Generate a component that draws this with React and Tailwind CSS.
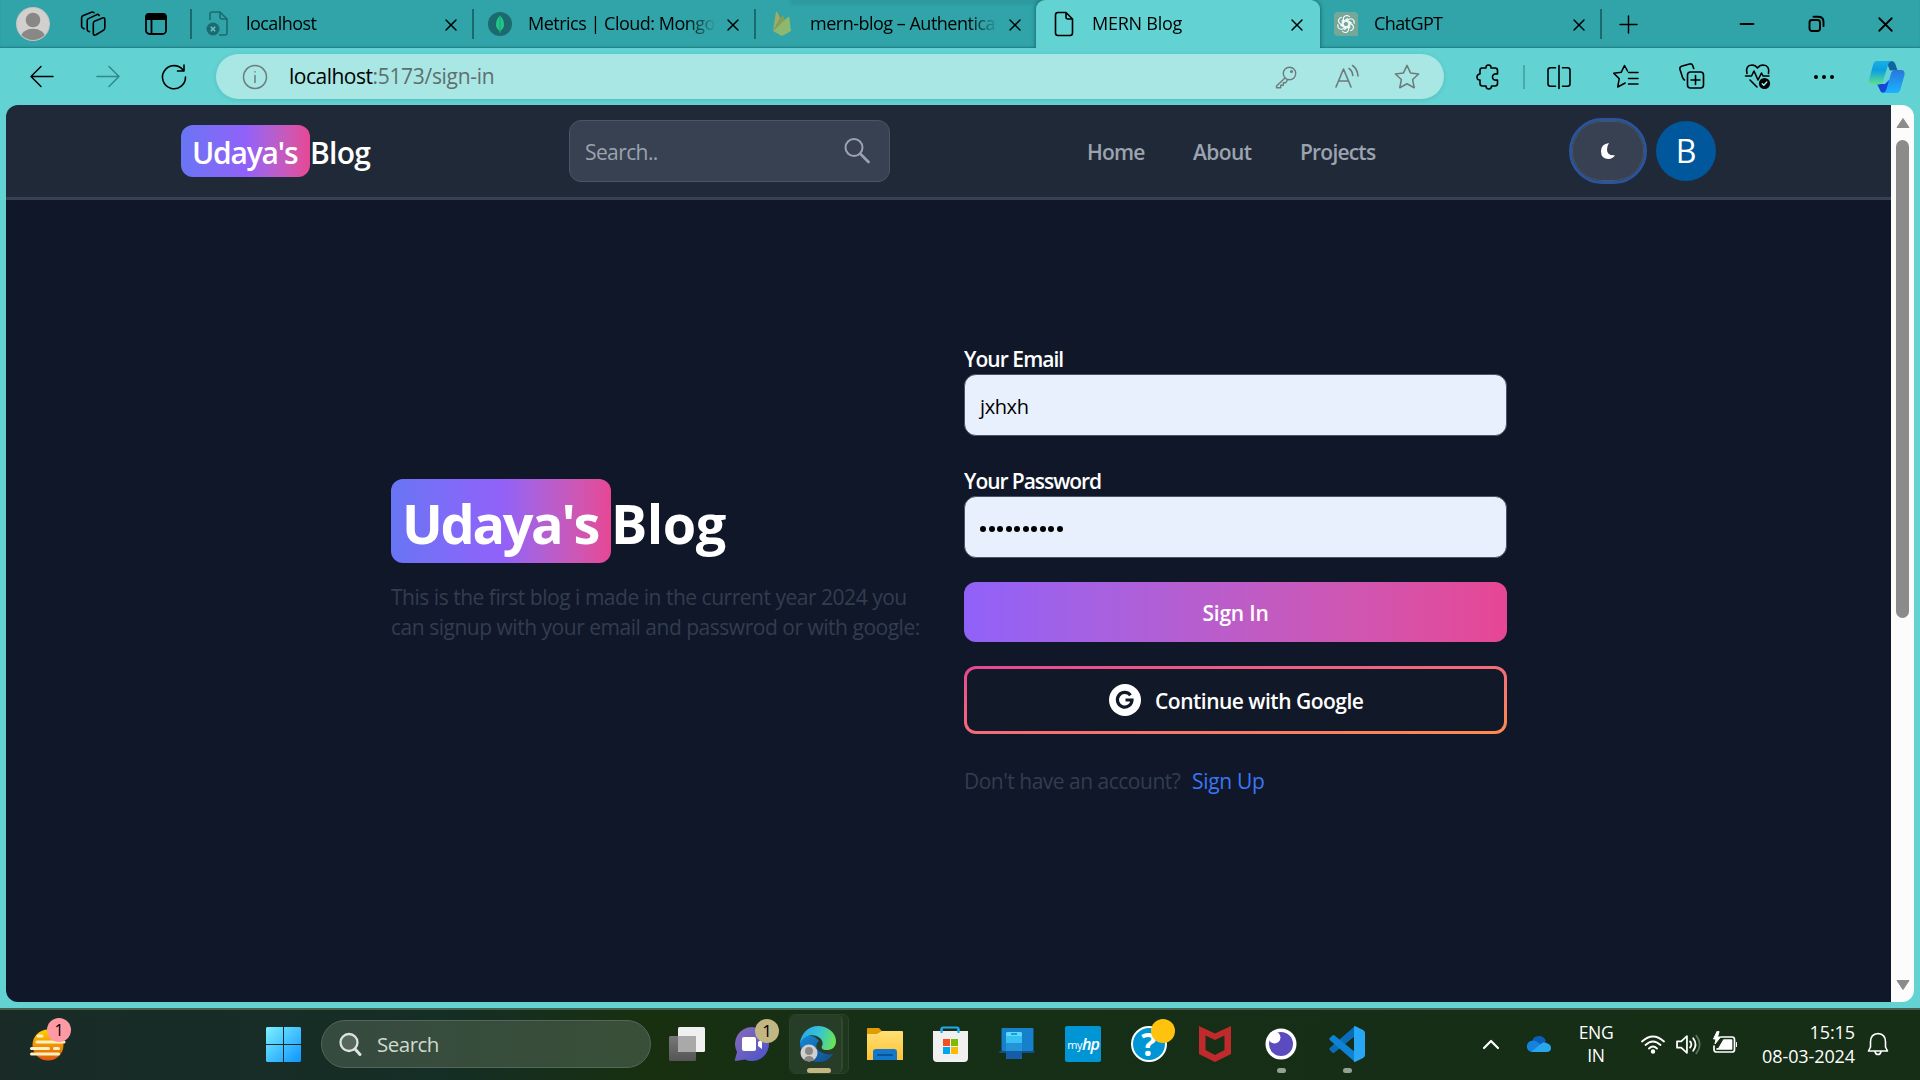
import React from 'react';
import { X, Plus, Minus } from 'lucide-react';

const Svg = ({ className, box = '0 0 24 24', children, sw = 1.5 }) => (
  <svg className={`shrink-0 ${className}`} viewBox={box} fill="none" stroke="currentColor" strokeWidth={sw} strokeLinecap="round" strokeLinejoin="round">
    {children}
  </svg>
);

function Tab({ icon, title, active, textClass }) {
  return (
    <div className={`relative flex h-[48px] shrink-0 items-center ${active ? '-mr-[2px] w-[284px] rounded-t-[9px] bg-[#62d2d2] pb-px shadow-[0_0_4px_rgba(0,50,60,0.7)]' : 'w-[282px] pb-px'}`}>
      <div className="flex w-[56px] shrink-0 items-center pl-[16px]">{icon}</div>
      <div className="mt-[-2px] w-[188px] shrink-0 overflow-hidden whitespace-nowrap text-[18px] leading-[28px] text-black [mask-image:linear-gradient(to_right,black_84%,transparent)]">
        <span className={textClass}>{title}</span>
      </div>
      <X className="ml-[7px] mt-[2px] h-[20px] w-[20px] shrink-0 text-black" strokeWidth={1.7} />
    </div>
  );
}

const Divider = () => <div className="-mr-[2px] h-[30px] w-[2px] shrink-0 bg-[#1b696d]" />;

function TabStrip() {
  return (
    <div className="relative flex h-[48px] items-center overflow-hidden bg-[#30a4a8] shadow-[inset_0_-2px_2px_-1px_#1f7c82]">
      <div className="absolute left-[790px] top-0 h-[3px] w-[340px] rounded-full bg-[#277f85] opacity-60 blur-[2px]" />
      <svg className="ml-[16px] h-[34px] w-[34px] shrink-0" viewBox="0 0 34 34">
        <clipPath id="av"><circle cx="17" cy="17" r="16" /></clipPath>
        <circle cx="17" cy="17" r="17" fill="#c4c3c1" />
        <circle cx="17" cy="17" r="16" fill="#d2d0ce" />
        <g clipPath="url(#av)" fill="#8a8886"><circle cx="17" cy="13" r="7.3" /><ellipse cx="17" cy="30" rx="12" ry="8.3" /></g>
      </svg>
      <Svg className="ml-[30px] h-[26px] w-[26px] text-black" box="0 0 26 26" sw={1.6}>
        <path d="M14.500 10.300l8-3.400q2.300-.7 2.300 1.500v8.700q0 1.600-1.500 2.300l-7.300 4.300q-2.700 1.300-2.700-1.500v-9.700q0-1.600 1.200-2.200z" />
        <path d="M9.500 20.700L8 20q-.8-.5-.8-1.700V9.700q0-1.500 1.200-2.100l8.500-4q1.800-.6 2.300.8" />
        <path d="M4 17.800l-1.500-.9q-.9-.5-.9-1.700V6.900q0-1.500 1.200-2.100l8.700-3.600q1.500-.5 2.500.5" />
      </Svg>
      <Svg className="ml-[38px] h-[24px] w-[24px] text-black" sw={1.8}>
        <rect x="2" y="2" width="20" height="20" rx="3.500" /><path d="M2 7V5q0-3 3-3h14q3 0 3 3v2z" fill="currentColor" /><path d="M7.500 7v15" />
      </Svg>
      <div className="ml-[22px] flex shrink-0 items-center">
        <Divider />
        <Tab title="localhost" textClass="tracking-[-0.55px]" icon={
          <svg className="h-[25px] w-[23px]" viewBox="0 0 23 25" fill="none" stroke="#1c6b6e" strokeWidth="1.600">
            <path d="M4 9V3q0-2 2-2h8l7 7v14q0 2-2 2h-6M14 1v5q0 2 2 2h5" /><circle cx="7" cy="18" r="6.500" fill="#1c6b6e" stroke="none" /><path d="M4.800 15.800l4.400 4.400m0-4.400l-4.400 4.400" stroke="#5fc9ca" strokeWidth="1.500" />
          </svg>} />
        <Divider />
        <Tab title="Metrics | Cloud: Mongo" textClass="tracking-[-0.5px]" icon={
          <svg className="h-[24px] w-[24px]" viewBox="0 0 24 24"><circle cx="12" cy="12" r="12" fill="#1b6a6e" /><path d="M12 3.500q4 4 4 9 0 4-3.500 6.200l-.2 2h-.6l-.2-2Q8 16.500 8 12.500q0-5 4-9z" fill="#22c587" /><path d="M12 3.500v17" stroke="#1b9b70" strokeWidth=".8" /></svg>} />
        <Divider />
        <Tab title="mern-blog – Authentica" textClass="tracking-[-0.5px]" icon={
          <svg className="ml-[2px] h-[25px] w-[20px]" viewBox="0 0 20 25"><path d="M1 20L4 1q.5-1 1.200 0l3 6z" fill="#a3ab60" /><path d="M1 20L10 5q.6-.8 1.200 0l2 4z" fill="#8e9b52" /><path d="M1 20L16 6q1-.6 1.300.5L19 20l-8 4.500q-1 .5-2 0z" fill="#8db870" /></svg>} />
        <Tab active title="MERN Blog" textClass="tracking-[-0.25px]" icon={
          <Svg className="ml-[2px] h-[26px] w-[20px] text-black" box="0 0 20 26" sw={1.600}><path d="M12 1.500H4q-2.500 0-2.500 2.500v18q0 2.500 2.500 2.500h12q2.500 0 2.500-2.500V8zM12 1.500V6q0 2 2 2h4.500" /></Svg>} />
        <Tab title="ChatGPT" textClass="tracking-[-0.6px]" icon={
          <svg className="h-[24px] w-[24px]" viewBox="0 0 24 24"><path d="M4 0h16q4 0 4 4v20H4q-4 0-4-4V4q0-4 4-4z" fill="#76a899" /><g fill="none" stroke="#fff" strokeWidth="1.100">
            {[0, 60, 120, 180, 240, 300].map((a) => <path key={a} transform={`rotate(${a} 12 12)`} d="M9.300 13.500V7.300q.2-3.500 3.300-3.800 2 0 3.200 1.500M9.300 9.200l4.600-2.600" />)}
          </g></svg>} />
        <Divider />
      </div>
      <Plus className="ml-[14px] h-[29px] w-[29px] shrink-0 text-black" strokeWidth={1.200} />
      <Minus className="ml-[93px] h-[22px] w-[22px] shrink-0 text-black" strokeWidth={2} />
      <Svg className="ml-[50px] h-[18px] w-[18px] text-black" box="0 0 18 18" sw={1.900}><rect x="1.500" y="5" width="10.500" height="11" rx="2.500" /><path d="M5.500 1.800h4.500q5.500 0 5.500 5v4.200" /></Svg>
      <X className="ml-[47px] h-[25px] w-[25px] shrink-0 text-black" strokeWidth={1.700} />
    </div>
  );
}

function Toolbar() {
  return (
    <div className="flex h-[57px] items-center bg-[#62d2d2] text-black">
      <Svg className="ml-[28px] h-[28px] w-[28px]" box="0 0 28 28" sw={1.500}><path d="M25 13.500H3M13 3.500l-10 10 10 10" /></Svg>
      <Svg className="ml-[39px] h-[28px] w-[28px] text-[#33888a]" box="0 0 28 28" sw={1.500}><path d="M2 13.500h22M14 3.500l10 10-10 10" /></Svg>
      <Svg className="ml-[37px] h-[28px] w-[28px]" box="0 0 28 28" sw={1.600}><path d="M25.500 14A11.500 11.500 0 1 1 23 7M24 2v6h-6.500" /></Svg>
      <div className="ml-[28px] flex h-[45px] w-[1228px] items-center rounded-full bg-[#a8e7e4] text-[#6d7b7b] shadow-[0_1px_4px_rgba(20,90,90,0.15)]">
        <Svg className="ml-[26px] h-[26px] w-[26px]" box="0 0 26 26" sw={1.500}><circle cx="13" cy="13" r="11.500" /><path d="M13 11.500V18.500M13 7.800v.2" /></Svg>
        <div className="ml-[21px] flex-1 whitespace-nowrap pt-px text-[21px] tracking-[-0.5px] text-[#5f6e6e]"><span className="text-black">localhost</span><span className="tracking-[-0.3px]">:5173/sign-in</span></div>
        <Svg className="h-[24px] w-[24px]" sw={1.400}><circle cx="15.500" cy="8.500" r="6.200" /><path d="M11 13l-8.500 8v1.800h4.200v-2.500h2.600v-2.600h2.500L13.500 15" /><circle cx="17.500" cy="6.500" r=".8" fill="currentColor" /></Svg>
        <Svg className="ml-[36px] h-[26px] w-[26px]" box="0 0 26 26" sw={1.600}><path d="M2 23L9.500 5 17 23M4.800 17h9.500M15 4.500q3.500 2.500 3.800 7M18.500 1.500q5 3.500 5.500 10.500" /></Svg>
        <Svg className="ml-[33px] mr-[23px] h-[28px] w-[28px]" sw={1.300}><path d="M12 2l3 6.500 7 .9-5.200 4.800 1.400 7L12 17.800l-6.200 3.400 1.400-7L2 9.400l7-.9z" /></Svg>
      </div>
      <Svg className="ml-[30px] h-[28px] w-[28px]" box="0 0 28 28" sw={1.600}><path d="M8 5h4q-.3-3 2.500-3T17 5h4q2.500 0 2.500 2.500V11q-5-.7-5 3t5 3v3.500Q23.500 23 21 23h-3.500q0 3-2.700 3t-2.800-3H8.500Q6 23 6 20.500V17q-3 .2-3-2.800T6 11V7.500Q6 5 8 5z" /></Svg>
      <div className="ml-[21px] h-[24px] w-[2px] shrink-0 bg-[#4aa9aa]" />
      <Svg className="ml-[21px] h-[26px] w-[26px]" box="0 0 26 26" sw={1.600}><path d="M9.500 3.800H4.500q-2.500 0-2.500 2.500v13.500q0 2.500 2.500 2.500h5M16.500 3.800h5q2.500 0 2.500 2.500v13.500q0 2.500-2.500 2.500h-5M13 1.500v23" /></Svg>
      <Svg className="ml-[40px] h-[27px] w-[27px]" box="0 0 27 27" sw={1.500}><path d="M15.500 8L12.500 2.500 9.200 9.300l-7.500 1 5.500 5.300-1.500 8.400 7.500-4M16.500 9.500h9.500M16.500 15.500h9.500M16.500 21h9.500" /></Svg>
      <Svg className="ml-[39px] h-[29px] w-[29px]" box="0 0 29 29" sw={1.600}><rect x="9.500" y="10" width="16" height="16" rx="3" /><path d="M17.500 13.500v9M13 18h9M6.500 18q-1.500-1-2-2.700L2 7.500q-.6-2.400 1.500-3.200l8-2.300q2.300-.6 3.200 1.500l1 3" /></Svg>
      <Svg className="ml-[37px] h-[29px] w-[29px]" box="0 0 29 29" sw={1.600}><path d="M3 11.500Q1 3.500 8 3q3.500 0 5.500 3 2-3 5.500-3 7 .5 5.500 8.500M1.500 14h6l2.500-5 4 9 3.500-7 1.500 3h6M6 18l7 7" /><circle cx="20.500" cy="21.500" r="5.600" fill="currentColor" stroke="none" /><path d="M18.200 21.700l1.600 1.600 3-3.300" stroke="#9ff" strokeWidth="1.300" /></Svg>
      <Svg className="ml-[39px] h-[24px] w-[24px]" sw={0}><g fill="currentColor"><circle cx="4" cy="12" r="2" /><circle cx="12" cy="12" r="2" /><circle cx="20" cy="12" r="2" /></g></Svg>
      <svg className="ml-[32px] h-[34px] w-[37px] shrink-0" viewBox="0 0 37 34">
        <defs>
          <linearGradient id="c1" x1="0" y1="0" x2="0" y2="1"><stop stopColor="#18aee6" /><stop offset=".4" stopColor="#0aa0de" /><stop offset="1" stopColor="#5fe08c" /></linearGradient>
          <linearGradient id="c2" x1="0" y1="0" x2="0" y2="1"><stop stopColor="#2a76dc" /><stop offset="1" stopColor="#18b4ff" /></linearGradient>
        </defs>
        <path d="M18 1h5q3.500 0 4.500 3.500l2 6h-7.500z" fill="#10669c" />
        <path d="M9 24h8l4-4v9q-1 4-4 4h-1q-3.500 0-4.500-4z" fill="#1745d8" />
        <path d="M9 1h15q-3 .5-4 4l-5 16q-1 3.500-4.500 3.500H5Q0 24.500 1.300 19L5 5q1-4 4-4z" fill="url(#c1)" />
        <path d="M28 33H14q3.500-.5 4.500-4l4.500-15.500q1-3.500 4.500-3.500H33q4.500 0 3.300 5.500L32.500 29q-1 4-4.500 4z" fill="url(#c2)" />
      </svg>
    </div>
  );
}

function SiteHeader() {
  return (
    <header className="flex h-[95px] shrink-0 items-center border-b-[3px] border-[#374151] bg-[#1f2937]">
      <div className="ml-[175px] flex h-[52px] items-center whitespace-nowrap text-[30px] font-semibold text-white">
        <span className="flex h-[52px] w-[129px] items-center rounded-[12px] bg-gradient-to-r from-[#6875f5] via-[#9061f9] to-[#e74694] pl-[11px] pt-[2px] tracking-[-1.200px]">Udaya's</span>
        <span className="w-[70px] pt-[2px] tracking-[-0.7px]">Blog</span>
      </div>
      <div className="ml-[189px] flex h-[62px] w-[321px] items-center rounded-[12px] border-[1.500px] border-[#4b5563] bg-[#374151] text-[21px] text-[#9ca3af]">
        <span className="ml-[15px] w-[100px] pt-[3px] tracking-[-0.6px]">Search..</span>
        <Svg className="ml-[159px] h-[26px] w-[26px]" box="0 0 26 26" sw={2}><circle cx="10" cy="9.500" r="8.500" /><path d="M16.500 16l8 8" strokeWidth="2.600" /></Svg>
      </div>
      <nav className="ml-[197px] flex whitespace-nowrap pt-[3px] text-[21px] font-semibold tracking-[-0.8px] text-[#9ca3af]">
        <span className="w-[106px]">Home</span><span className="w-[107px] tracking-[-0.6px]">About</span><span className="w-[80px]">Projects</span>
      </nav>
      <div className="ml-[192px] flex h-[60px] w-[72px] items-center justify-center rounded-full border-[1.500px] border-[#4b5563] bg-[#374151] outline-[3px] outline-[#2c549a]">
        <svg className="h-[18px] w-[18px]" viewBox="0 0 18 18"><path d="M10 1Q2 2 2 9.300 2 17 9.500 17q4 0 6.500-3.800Q8 14 8 7.500 8 4 10 1z" fill="#fff" /></svg>
      </div>
      <div className="ml-[12px] flex h-[60px] w-[60px] items-center justify-center rounded-full bg-[#00579b] text-[32px] text-white">B</div>
    </header>
  );
}

const field = 'flex h-[62px] items-center rounded-[12px] border-[1.500px] border-[#4b5563] bg-[#e8f0fe] text-[20px] text-black';

function SignIn() {
  return (
    <main className="flex flex-1 items-start bg-[#101729] text-[21px]">
      <section className="ml-[385px] mt-[279px] w-[573px]">
        <h1 className="flex items-center whitespace-nowrap text-[54px] font-bold leading-none text-white">
          <span className="flex h-[84px] w-[220px] items-center rounded-[12px] bg-gradient-to-r from-[#6875f5] via-[#9061f9] to-[#e74694] pl-[11px] pt-[4px] tracking-[-2.300px]">Udaya's</span>
          <span className="pt-[4px] tracking-[-0.500px]">Blog</span>
        </h1>
        <p className="mt-[20px] whitespace-nowrap leading-[29px] text-[#323d4e]">
          <span className="block h-[30px] tracking-[-0.48px]">This is the first blog i made in the current year 2024 you</span>
          <span className="block h-[30px] tracking-[-0.48px]">can signup with your email and passwrod or with google:</span>
        </p>
      </section>
      <section className="mt-[144px] flex w-[543px] flex-col whitespace-nowrap font-semibold text-white">
        <div className="h-[30px] leading-[30px] tracking-[-0.95px]">Your Email</div>
        <div className={`${field} pl-[15px] pt-[3px] font-normal tracking-[-0.4px]`}>jxhxh</div>
        <div className="mt-[30px] h-[30px] leading-[30px] tracking-[-1.05px]">Your Password</div>
        <div className={`${field} gap-[2.500px] pl-[15px] pt-[3px]`}>
          {Array.from({ length: 10 }, (_, i) => <i key={i} className="h-[6px] w-[6px] rounded-full bg-black" />)}
        </div>
        <button className="mt-[24px] h-[60px] rounded-[12px] bg-gradient-to-r from-[#9061f9] to-[#e74694] pt-[4px] tracking-[-0.2px]">Sign In</button>
        <div className="mt-[24px] h-[68px] rounded-[12px] bg-gradient-to-br from-[#e74694] to-[#ff8a4c] p-[3px]">
          <button className="flex h-full w-full items-center rounded-[9px] bg-[#111827]">
            <svg className="ml-[142px] h-[32px] w-[32px]" viewBox="0 0 32 32"><circle cx="16" cy="16" r="16" fill="#fff" /><path d="M21.500 11.300A7.300 7.300 0 1 0 23 16h-6.500" fill="none" stroke="#111827" strokeWidth="3.200" /></svg>
            <span className="ml-[14px] pt-[4px] tracking-[-0.5px]">Continue with Google</span>
          </button>
        </div>
        <div className="mt-[32px] flex font-normal leading-[30px]">
          <span className="w-[228px] tracking-[-0.5px] text-[#323d4e]">Don't have an account?</span>
          <span className="tracking-[-0.3px] text-[#3b76f6]">Sign Up</span>
        </div>
      </section>
    </main>
  );
}

function ScrollBar() {
  return (
    <div className="flex w-[23px] flex-col items-center bg-[#fcfcfc]">
      <svg className="mt-[12px] h-[12px] w-[14px]" viewBox="0 0 14 12"><path d="M7 1.500L13 10.500H1z" fill="#8b8b8b" stroke="#8b8b8b" strokeLinejoin="round" /></svg>
      <div className="mt-[11px] h-[478px] w-[13px] rounded-full bg-[#8b8b8b]" />
      <svg className="mb-[11px] mt-auto h-[12px] w-[14px]" viewBox="0 0 14 12"><path d="M7 10.500L13 1.500H1z" fill="#8b8b8b" stroke="#8b8b8b" strokeLinejoin="round" /></svg>
    </div>
  );
}

const Cell = ({ children, dot }) => (
  <div className="relative flex h-[60px] w-[60px] items-center justify-center">
    {children}
    {dot && <div className="absolute bottom-[1px] h-[5px] w-[9px] rounded-full bg-[#95a193]" />}
  </div>
);

const I = ({ children }) => <svg className="h-[36px] w-[36px] overflow-visible" viewBox="0 0 36 36">{children}</svg>;

function Taskbar() {
  return (
    <footer className="flex h-[72px] items-center border-t-2 border-[#46604f] bg-[linear-gradient(90deg,#1a2b27_0%,#152e26_23%,#18300f_34%,#162f17_45%,#162d16_100%)] pb-[2px]">
      <div className="relative ml-[29px] h-[40px] w-[42px]">
        <svg className="h-[40px] w-[40px]" viewBox="0 0 40 40">
          <defs><linearGradient id="sun" x1="0" y1="0" x2="0" y2="1"><stop stopColor="#ffd000" /><stop offset="1" stopColor="#e2570c" /></linearGradient></defs>
          <circle cx="19" cy="21" r="15.500" fill="url(#sun)" />
          <g stroke="#fff0c0" strokeWidth="3" strokeLinecap="round"><path d="M9 12h4M8 18h27M2.500 24.500h17M25.500 24.500h4M2.500 30h27" /></g>
        </svg>
        <span className="absolute left-[18px] top-[-6px] flex h-[24px] w-[24px] items-center justify-center rounded-full bg-[#ff99a4] text-[16px] text-black">1</span>
      </div>
      <svg className="ml-[195px] h-[35px] w-[35px] shrink-0" viewBox="0 0 35 35">
        <defs><linearGradient id="win" gradientUnits="userSpaceOnUse" x1="0" y1="0" x2="35" y2="35"><stop stopColor="#7df0ff" /><stop offset="1" stopColor="#0c95ff" /></linearGradient></defs>
        <path d="M1 0h16v17H0V1zM18 0h16l1 1v16H18zM0 18h17v17H1l-1-1zM18 18h17v16l-1 1H18z" fill="url(#win)" />
      </svg>
      <div className="ml-[20px] flex h-[48px] w-[330px] items-center rounded-full border-[1.500px] border-[#52665a] bg-gradient-to-r from-[#364b40] to-[#394f37] text-[20.500px] text-[#d0d8d0]">
        <Svg className="ml-[16px] h-[24px] w-[24px] text-[#dfe3e1]" sw={2.300}><circle cx="11" cy="10.500" r="8.500" fill="#56675c" /><path d="M17 17l5 5.500" strokeWidth="3" /></Svg>
        <span className="ml-[15px] tracking-[-0.5px]">Search</span>
      </div>
      <div className="ml-[6px] flex">
        <div className="flex h-[60px] w-[60px] items-center justify-center"><I>
          <defs><linearGradient id="tv" x1="0" y1="0" x2="0" y2="1"><stop stopColor="#777" /><stop offset="1" stopColor="#555" /></linearGradient></defs>
          <rect x="0" y="10" width="27" height="25" rx="1.500" fill="url(#tv)" /><rect x="9" y="1" width="27" height="25" rx="1.500" fill="#f0f0f0" /><path d="M9 10h18v16H10.500L9 24.500z" fill="#a9a9a9" />
        </I></div>
        <div className="relative ml-[5px] flex h-[60px] w-[60px] items-center justify-center">
          <I>
            <defs><linearGradient id="ch" x1="0" y1="0" x2="1" y2="1"><stop stopColor="#8a6cb5" /><stop offset="1" stopColor="#4a52cc" /></linearGradient></defs>
            <path d="M18 1a17 17 0 1 1-7 32.500L1.500 35q-1 0-.5-1.500L3 26A17 17 0 0 1 18 1z" fill="url(#ch)" /><rect x="8" y="11" width="14" height="14" rx="2" fill="#fff" /><path d="M24 16l4-3v10l-4-3z" fill="#fff" />
          </I>
          <span className="absolute left-[33px] top-[5px] flex h-[24px] w-[24px] items-center justify-center rounded-full bg-[#c2b683] text-[17px] text-black">1</span>
        </div>
        <div className="ml-[7px] flex h-[60px] w-[60px] rounded-[6px] border border-[#2b4429] bg-[#1f371e]">
          <div className="relative flex h-full w-[53px] items-center rounded-[6px] border-r-2 border-[#304a2e] bg-[#273d27] pl-[10px]">
            <I>
              <defs>
                <linearGradient id="e1" x1="0" y1=".3" x2="1" y2=".5"><stop stopColor="#2ba6e8" /><stop offset=".5" stopColor="#35c3d8" /><stop offset="1" stopColor="#6be552" /></linearGradient>
                <linearGradient id="e2" x1="0" y1="0" x2="1" y2="1"><stop stopColor="#158ad8" /><stop offset="1" stopColor="#114a8b" /></linearGradient>
              </defs>
              <path d="M0 16C0 26 6 36 19 36c6 0 11-3 14-8-4 1-10 0-14-3-4-3-3-8 0-10C14 8 3 8 0 16z" fill="url(#e2)" />
              <path d="M0 17C1 7 9 0 18 0c10 0 18 7 18 15 0 7-5 9-9 9-5 0-6-2-5-4 1-2 1-4-1-7C16 7 4 8 0 17z" fill="url(#e1)" />
              <circle cx="9" cy="27" r="8.500" fill="#d2d0ce" /><circle cx="9" cy="25" r="4" fill="#8a8886" /><path d="M4 34q1-4 5-4t5 4q-5 2.800-10 0z" fill="#8a8886" />
            </I>
            <div className="absolute bottom-0 left-[17px] h-[5px] w-[24px] rounded-full bg-[#c2b683]" />
          </div>
        </div>
      </div>
      <div className="ml-[6px] flex gap-[6px]">
        <Cell><I>
          <defs><linearGradient id="fo" x1="0" y1="0" x2="0" y2="1"><stop stopColor="#ffdf75" /><stop offset="1" stopColor="#ffc233" /></linearGradient></defs>
          <path d="M0 3q0-1 1-1h10q1.500 0 2 1l2.500 3v6H0z" fill="#e29c00" /><path d="M0 8h10l5-3h20q1 0 1 1v28H0z" fill="url(#fo)" /><path d="M6 34v-8q0-3 3-3h18q3 0 3 3v8z" fill="#1377cb" /><path d="M11 29h14" stroke="#0c529b" strokeWidth="2" strokeLinecap="round" />
        </I></Cell>
        <Cell><I>
          <path d="M8.500 8V3q0-1.500 1.500-1.500h14q1.500 0 1.500 1.500v5" fill="none" stroke="#1caaf2" strokeWidth="2.200" /><path d="M0 5h35v27q0 4-4 4H4q-4 0-4-4z" fill="#f0f0f0" />
          <path d="M8.500 7V3M25.500 7V3" stroke="#1caaf2" strokeWidth="2.200" /><path d="M10 13h7v7h-7z" fill="#f25022" /><path d="M18 13h7v7h-7z" fill="#7fba00" /><path d="M10 21h7v7h-7z" fill="#00a4ef" /><path d="M18 21h7v7h-7z" fill="#ffb900" />
        </I></Cell>
        <Cell><I>
          <rect x="2.500" y="2" width="32" height="23" rx="1" fill="#1680ca" /><path d="M0 25h36q0 2-2 2H2q-2 0-2-2z" fill="#0f5088" /><rect x="7" y="6" width="16" height="27" rx="1.500" fill="#38c0f5" /><path d="M7 17h16v8H7z" fill="#2394d8" /><path d="M7 25h16v6.500q0 1.500-1.500 1.500h-13Q7 33 7 31.500z" fill="#155da6" /><path d="M7 7.500Q7 6 8.500 6h13Q23 6 23 7.500V10H7z" fill="#59dcff" /><path d="M12 8h6" stroke="#1680ca" strokeWidth="1.500" />
        </I></Cell>
        <Cell><div className="flex h-[36px] w-[36px] items-center justify-center rounded-[2px] bg-[#0096d6] text-[11px] leading-none tracking-[-0.4px] text-white">my<b className="text-[16px] font-semibold italic tracking-[-1px]">hp</b></div></Cell>
        <div className="relative flex h-[60px] w-[60px] items-center justify-center">
          <div className="flex h-[36px] w-[36px] items-center justify-center rounded-full border-2 border-white bg-[#0096d6] text-[32px] font-bold leading-none text-white">?</div>
          <div className="absolute left-[32px] top-[5px] h-[24px] w-[24px] rounded-full bg-[#ffc20e]" />
        </div>
        <Cell><I><path d="M2 0l16 7.500L34 0v28l-16 8-16-8z" fill="#c02a2d" /><path d="M8.500 9.500L18 14l9.500-4.500v14.500L18 29l-9.500-5z" fill="#162f16" /></I></Cell>
        <Cell dot><I><circle cx="18" cy="18" r="15.500" fill="#fff" /><circle cx="18" cy="18" r="12" fill="#5a4bbf" /><circle cx="11.500" cy="11.500" r="6" fill="#fff" /></I></Cell>
        <Cell dot><I>
          <path d="M26 0v10L5.500 26.500q-1 1-2 .2L.7 24q-.9-1 0-2z" fill="#0a6cb8" /><path d="M26 36V26L5.500 9.500q-1-.8-2 0L.7 12q-.9 1 0 2z" fill="#0f83d3" /><path d="M26 0l8 4q2 1 2 3v22q0 2-2 3l-8 4q-1.500 0-1-1V1q0-1 1-1z" fill="#28a8f4" />
        </I></Cell>
      </div>
      <Svg className="ml-[104px] h-[20px] w-[20px] text-white" box="0 0 20 20" sw={2.200}><path d="M3 14l7-7 7 7" /></Svg>
      <svg className="ml-[25px] h-[18px] w-[25px]" viewBox="0 0 25 18"><path d="M6 7Q7 1 13 1q5 0 7 5l-8 6z" fill="#0b5fb8" /><path d="M1 13Q0 6 7 5.500q3 0 5 2l6 4L6 17Q2 16.500 1 13z" fill="#1383de" /><path d="M5 17L16 8q2-1.500 5 .2 4 1 4 4.800 0 4-4.500 4z" fill="#2aa6ee" /></svg>
      <div className="ml-[27px] w-[36px] text-center text-[17.500px] leading-[23px] tracking-[-0.3px] text-white">ENG<br />IN</div>
      <Svg className="ml-[27px] h-[24px] w-[24px] text-white" sw={1.800}><path d="M1 9.500q11-10 22 0M4.500 13q7.500-7 15 0M8 16.500q4-4 8 0" /><circle cx="12" cy="19.500" r="1.300" fill="currentColor" /></Svg>
      <Svg className="ml-[11px] h-[25px] w-[25px] text-white" sw={1.700}><path d="M1 9v6h4l5.500 5V4L5 9zM13.500 9q2.500 3 0 6M16.500 6q4.500 6 0 12" /><path d="M19.500 3.500q6.500 8.500 0 17" stroke="#5c705a" /></Svg>
      <Svg className="ml-[11px] h-[26px] w-[26px] text-white" box="0 0 26 26" sw={1.700}><path d="M9 6h11q2.500 0 2.500 2.500v10q0 2.500-2.500 2.500H4.500Q2 21 2 18.500V15" /><path d="M7 17.500l5-8.500h7.500v9H5z" fill="currentColor" /><path d="M24.500 11.500v4M5 .5L1.500 8H4L3 13l5.500-7H5.500L7 1z" fill="currentColor" strokeWidth="1" /></Svg>
      <div className="ml-auto w-[100px] whitespace-nowrap text-right text-[18px] leading-[24px] tracking-[-0.1px] text-white">15:15<br />08-03-2024</div>
      <Svg className="ml-[11px] mr-[30px] h-[24px] w-[24px] text-white" sw={1.600}><path d="M12 1.500q-7.500.5-7.500 8.500v5L2.500 19h19l-2-4v-5q0-8-7.500-8.500zM9 19.500q.5 3 3 3t3-3" /></Svg>
    </footer>
  );
}

export default function App() {
  return (
    <div className="flex h-[1080px] w-[1920px] flex-col overflow-hidden bg-[#62d2d2] font-['Open_Sans','Noto_Sans',sans-serif]">
      <TabStrip />
      <Toolbar />
      <div className="mx-[6px] mb-[6px] flex h-[897px] overflow-hidden rounded-[12px]">
        <div className="flex w-[1885px] flex-col"><SiteHeader /><SignIn /></div>
        <ScrollBar />
      </div>
      <Taskbar />
    </div>
  );
}
